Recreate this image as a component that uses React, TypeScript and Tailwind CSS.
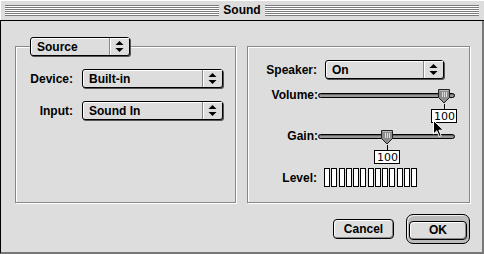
import React from 'react';

const font = "font-['Liberation_Sans',Arial,sans-serif]";

const Arrows: React.FC = () => (
  <svg width="9" height="11" viewBox="0 0 9 11" className="block">
    <path d="M4.5 0 L8.5 4 L0.5 4 Z" fill="#000" />
    <path d="M0.5 7 L8.5 7 L4.5 11 Z" fill="#000" />
  </svg>
);

const Popup: React.FC<{ label: string; width: number }> = ({ label, width }) => (
  <div
    className="flex h-[19px] shrink-0 items-stretch rounded-[3px] border border-black bg-[#dddddd] shadow-[1px_1px_0_#555,inset_1px_1px_0_#fff]"
    style={{ width }}
  >
    <div className="flex flex-1 items-center pl-[6px] text-[12px] font-bold leading-none text-black">{label}</div>
    <div className="flex w-[20px] items-center justify-center border-l border-[#888] shadow-[inset_1px_1px_0_#fff]">
      <Arrows />
    </div>
  </div>
);

const Thumb: React.FC = () => (
  <svg width="14" height="16" viewBox="0 0 14 16" className="block">
    <path d="M1.5 1.5 H12.5 V9.5 L7 15 L1.5 9.5 Z" fill="#8c8c8c" stroke="#222" strokeWidth="1" />
    <path d="M2.5 2.5 H11.5" stroke="#bbb" />
    <path d="M5.5 4 V9 M7.5 4 V9 M9.5 4 V9" stroke="#ddd" />
  </svg>
);

const Slider: React.FC<{ label: string; value: number }> = ({ label, value }) => {
  const left = Math.round((value / 100) * 119);
  return (
    <div className="flex items-start">
      <div className="w-[70px] text-right text-[12px] font-bold leading-[13px] text-black">{label}</div>
      <div className="relative h-[34px] w-[137px]">
        <div className="absolute left-0 right-0 top-[4px] h-[5px] rounded-full border border-black bg-[#999] shadow-[inset_0_1px_0_#666]" />
        <div className="absolute top-[-1px]" style={{ left }}>
          <Thumb />
        </div>
        <div className="absolute top-[15px] h-[5px] w-px bg-black" style={{ left: left + 7 }} />
        <div
          className="absolute top-[20px] flex h-[14px] w-[26px] items-center justify-end border border-black bg-white pr-[1px] font-['DejaVu_Sans',sans-serif] text-[11px] leading-none text-black"
          style={{ left: left - 6 }}
        >
          100
        </div>
      </div>
    </div>
  );
};

const Cursor: React.FC = () => (
  <svg width="12" height="18" viewBox="0 0 12 18" className="block">
    <path d="M0.5 0.5 V14 L3.8 10.8 L6.2 16.5 L8.2 15.6 L5.9 10.2 L10.5 10.2 Z" fill="#000" stroke="#fff" strokeWidth="1" />
  </svg>
);

const App: React.FC = () => {
  const bars = Array.from({ length: 13 });
  return (
    <div className={`${font} flex h-[254px] w-[484px] select-none flex-col bg-[#dddddd]`}>
      {/* title bar */}
      <div className="flex h-[21px] shrink-0 items-center border-b border-black bg-[#dddddd] pl-[5px] pr-[5px] shadow-[inset_1px_1px_0_#fff]">
        <div className="h-[11px] flex-1 bg-[repeating-linear-gradient(to_bottom,#7a7a7a_0px,#7a7a7a_1px,#ffffff_1px,#ffffff_2px)]" />
        <div className="px-[4px] text-[12px] font-bold leading-none text-black">Sound</div>
        <div className="h-[11px] flex-1 bg-[repeating-linear-gradient(to_bottom,#7a7a7a_0px,#7a7a7a_1px,#ffffff_1px,#ffffff_2px)]" />
      </div>

      {/* body */}
      <div className="flex flex-1 flex-col border-b-2 border-l border-r-2 border-b-[#777] border-l-black border-r-[#777] pl-[14px] pt-[25px]">
        <div className="flex gap-[11px]">
          {/* left group */}
          <div className="relative h-[157px] w-[221px] border border-[#888] shadow-[inset_1px_1px_0_#fff,1px_1px_0_#fff]">
            <div className="absolute left-[14px] top-[-10px]">
              <Popup label="Source" width={100} />
            </div>
            <div className="mt-[22px] flex flex-col gap-[13px]">
              <div className="flex items-center">
                <div className="w-[57px] text-right text-[12px] font-bold text-black">Device:</div>
                <div className="ml-[9px]">
                  <Popup label="Built-in" width={141} />
                </div>
              </div>
              <div className="flex items-center">
                <div className="w-[57px] text-right text-[12px] font-bold text-black">Input:</div>
                <div className="ml-[9px]">
                  <Popup label="Sound In" width={141} />
                </div>
              </div>
            </div>
          </div>

          {/* right group */}
          <div className="relative h-[157px] w-[223px] border border-[#888] shadow-[inset_1px_1px_0_#fff,1px_1px_0_#fff]">
            <div className="mt-[13px] flex flex-col">
              <div className="flex items-center">
                <div className="w-[69px] text-right text-[12px] font-bold text-black">Speaker:</div>
                <div className="ml-[8px]">
                  <Popup label="On" width={119} />
                </div>
              </div>
              <div className="mt-[10px]">
                <Slider label="Volume:" value={100} />
              </div>
              <div className="mt-[7px]">
                <Slider label="Gain:" value={52} />
              </div>
              <div className="mt-[4px] flex items-center">
                <div className="w-[69px] text-right text-[12px] font-bold text-black">Level:</div>
                <div className="ml-[7px] flex w-[93px] justify-between">
                  {bars.map((_, i) => (
                    <div key={i} className="h-[19px] w-[6px] border border-black bg-white" />
                  ))}
                </div>
              </div>
            </div>
            <div className="absolute left-[185px] top-[73px]">
              <Cursor />
            </div>
          </div>
        </div>

        {/* buttons */}
        <div className="mt-[11px] flex items-center justify-end gap-[12px] pr-[12px]">
          <button className="h-[20px] w-[61px] rounded-[4px] border border-black bg-[#dddddd] text-[12px] font-bold leading-none text-black shadow-[inset_1px_1px_0_#fff,inset_-1px_-1px_0_#888]">
            Cancel
          </button>
          <div className="rounded-[7px] border border-black bg-[#bbbbbb] p-[2px] shadow-[inset_1px_1px_0_#eee]">
            <button className="h-[19px] w-[58px] rounded-[4px] border border-black bg-[#dddddd] text-[12px] font-bold leading-none text-black shadow-[inset_1px_1px_0_#fff,inset_-1px_-1px_0_#888]">
              OK
            </button>
          </div>
        </div>
      </div>
    </div>
  );
};

export default App;
